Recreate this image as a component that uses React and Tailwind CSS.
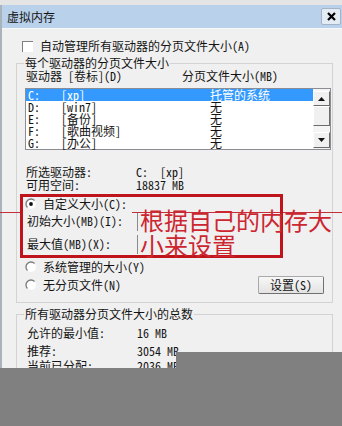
import React from "react";

const F = "font-['Noto_Sans_Mono_CJK_SC','Noto_Sans_CJK_SC',sans-serif]";

function Radio({ on }) {
  return (
    <svg width="12" height="12" viewBox="0 0 12 12" className="shrink-0">
      <circle cx="6" cy="6" r="5" fill="#ffffff" />
      <path d="M9.54 2.46 A5 5 0 0 0 2.46 9.54" fill="none" stroke="#7a7a7a" strokeWidth="1.3" />
      {on && <circle cx="6" cy="6" r="1.9" fill="#111111" />}
    </svg>
  );
}

function ScrollBtn({ dir, h }) {
  return (
    <div className={`${h} shrink-0 w-full flex items-center justify-center bg-[#f0f0f0] border-l border-t border-l-white border-t-white border-r border-b border-r-[#6b6b6b] border-b-[#6b6b6b]`}>
      <svg width="7" height="4" viewBox="0 0 7 4">
        {dir === "up" ? <path d="M0 4 L3.5 0 L7 4 Z" fill="#111" /> : <path d="M0 0 L3.5 4 L7 0 Z" fill="#111" />}
      </svg>
    </div>
  );
}

export default function App() {
  const rows = [
    ["C:", "[xp]", "托管的系统"],
    ["D:", "[win7]", "无"],
    ["E:", "[备份]", "无"],
    ["F:", "[歌曲视频]", "无"],
    ["G:", "[办公]", "无"],
  ];
  return (
    <div className={`relative w-[342px] h-[426px] overflow-hidden bg-[#f0f0f0] text-[12px] leading-[12px] text-[#141414] ${F}`}>
      <div className="h-[5px] bg-[#e4e4e4]" />
      <div className="flex">
        <div className="w-[2px] bg-[#aab2bb] shrink-0" />
        <div className="flex-1 flex flex-col">
          {/* title bar */}
          <div className="h-[23px] shrink-0 flex items-center justify-between pl-[5px] pr-[1px] bg-[#b9d1ea]">
            <span className="text-[12px] leading-[14px]">虚拟内存</span>
            <div className="w-[20px] h-[17px] flex items-center justify-center rounded-[2px] border border-[#a3b4c8] bg-[#e3ebf4]">
              <svg width="9" height="9" viewBox="0 0 9 9">
                <path d="M1 1 L8 8 M8 1 L1 8" stroke="#000" strokeWidth="2.2" />
              </svg>
            </div>
          </div>
          <div className="h-[1px] shrink-0 bg-[#f6f9fc]" />
          {/* body */}
          <div className="flex flex-col shrink-0">
            <div className="mt-[11px] h-[12px] shrink-0 flex items-center pl-[20px]">
              <div className="w-[11px] h-[11px] bg-white border-l border-t border-l-[#808080] border-t-[#808080]" />
              <span className="ml-[7px]">自动管理所有驱动器的分页文件大小(A)</span>
            </div>

            <fieldset className="mt-[4px] ml-[14px] w-[317px] h-[247px] shrink-0 border border-[#d3d3d3]">
              <legend className="ml-[7px] px-[1px] leading-[14px]">每个驱动器的分页文件大小</legend>
              <div className="pl-[8px] flex flex-col">
                <div className="h-[12px] shrink-0 flex pl-[1px]">
                  <span className="w-[156px]">驱动器 [卷标](D)</span>
                  <span>分页文件大小(MB)</span>
                </div>
                <div className="mt-[6px] w-[306px] h-[62px] shrink-0 flex border border-[#8a8d93] bg-white">
                  <div className="flex-1 flex flex-col">
                    {rows.map((r, i) => (
                      <div key={i} className={`h-[12px] shrink-0 flex pl-[2px] ${i === 0 ? "bg-[#3399ff] text-white" : ""}`}>
                        <span className="w-[33px]">{r[0]}</span>
                        <span className="w-[149px]">{r[1]}</span>
                        <span>{r[2]}</span>
                      </div>
                    ))}
                  </div>
                  <div className="w-[17px] flex flex-col pt-[2px] pb-[1px] bg-[#f4f4f4]">
                    <ScrollBtn dir="up" h="h-[15px]" />
                    <div className="h-[20px] shrink-0 w-full bg-[#f0f0f0] border-l border-t border-l-white border-t-white border-r border-b border-r-[#6b6b6b] border-b-[#6b6b6b]" />
                    <div className="flex-1" />
                    <ScrollBtn dir="down" h="h-[16px]" />
                  </div>
                </div>

                <div className="mt-[16px] h-[12px] shrink-0 flex pl-[1px]">
                  <span className="w-[110px]">所选驱动器:</span>
                  <span className="w-[24px]">C:</span>
                  <span>[xp]</span>
                </div>
                <div className="mt-[1px] h-[12px] shrink-0 flex pl-[1px]">
                  <span className="w-[110px]">可用空间:</span>
                  <span>18837 MB</span>
                </div>

                <div className="mt-[6px] h-[14px] shrink-0 flex items-center">
                  <Radio on />
                  <span className="ml-[6px]">自定义大小(C):</span>
                </div>
                <div className="h-[20px] shrink-0 flex items-center pl-[2px]">
                  <span className="w-[110px]">初始大小(MB)(I):</span>
                  <div className="h-[19px] w-[2px] border-l border-[#8a8a8a]" />
                </div>
                <div className="mt-[3px] h-[20px] shrink-0 flex items-center pl-[2px]">
                  <span className="w-[110px]">最大值(MB)(X):</span>
                  <div className="h-[19px] w-[2px] border-l border-[#8a8a8a]" />
                </div>

                <div className="mt-[6px] h-[14px] shrink-0 flex items-center">
                  <Radio />
                  <span className="ml-[6px]">系统管理的大小(Y)</span>
                </div>
                <div className="mt-[2px] h-[18px] shrink-0 flex items-center">
                  <Radio />
                  <span className="ml-[6px]">无分页文件(N)</span>
                  <div className="ml-auto mr-[8px] w-[66px] h-[18px] flex items-center justify-center rounded-[2px] border border-[#a9a9a9] border-r-[#707070] border-b-[#707070] bg-gradient-to-b from-[#f7f7f7] to-[#e3e3e3]">
                    设置(S)
                  </div>
                </div>
              </div>
            </fieldset>

            <fieldset className="mt-[4px] ml-[14px] w-[317px] h-[130px] shrink-0 border border-[#d3d3d3]">
              <legend className="ml-[7px] px-[1px] leading-[14px]">所有驱动器分页文件大小的总数</legend>
              <div className="pl-[10px] flex flex-col">
                <div className="mt-[6px] h-[12px] shrink-0 flex">
                  <span className="w-[110px]">允许的最小值:</span>
                  <span>16 MB</span>
                </div>
                <div className="mt-[6px] h-[12px] shrink-0 flex">
                  <span className="w-[110px]">推荐:</span>
                  <span>3054 MB</span>
                </div>
                <div className="mt-[3px] h-[12px] shrink-0 flex">
                  <span className="w-[110px]">当前已分配:</span>
                  <span>2036 MB</span>
                </div>
              </div>
            </fieldset>
          </div>
        </div>
      </div>

      {/* red annotation */}
      <div className="absolute left-0 top-[212px] w-[20px] h-[1px] bg-[#c4303a]" />
      <div className="absolute left-[132px] right-0 top-[212px] h-[1px] bg-[#c4303a]" />
      <div className="absolute left-[20px] top-[194px] w-[263px] h-[64px] border-[3px] border-[#c0141c]" />
      <div className="absolute left-[140px] top-[207px] text-[24px] leading-[25px] text-[#cc2630] font-['Noto_Sans_CJK_SC',sans-serif]">
        <div>根据自己的内存大</div>
        <div>小来设置</div>
      </div>

      {/* gray cover */}
      <div className="absolute left-[176px] right-0 top-[352px] h-[16px] bg-[#808080]" />
      <div className="absolute left-0 right-0 top-[368px] h-[58px] bg-[#808080]" />
    </div>
  );
}
